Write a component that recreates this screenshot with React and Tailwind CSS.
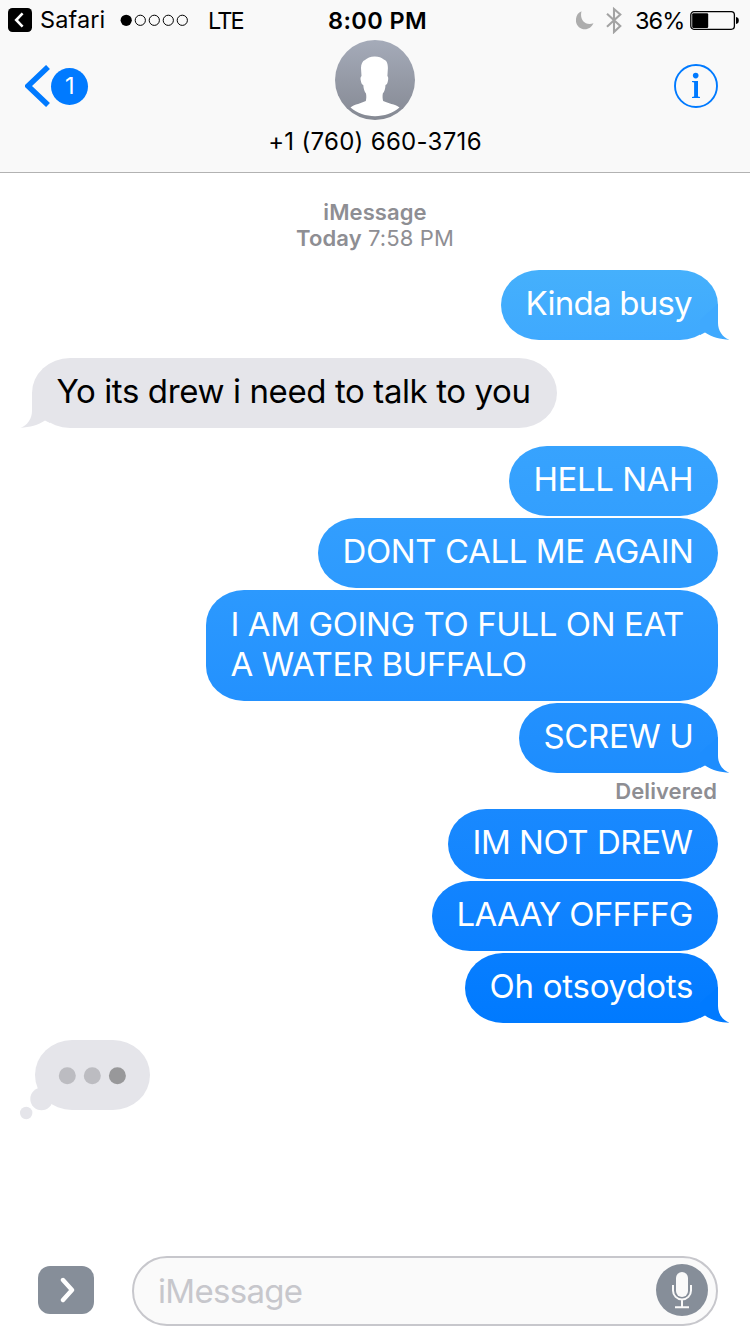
import React from "react";

const MESSAGES = [
  {
    lines: ["Kinda busy"],
    box: "w-[217px] h-[70px] mt-[19px] bg-linear-to-b from-[#45b0fc] to-[#3fa9fe]",
    text: "tracking-[-0.75px]",
    tail: "fill-[#3fa9fe]",
  },
  {
    lines: ["Yo its drew i need to talk to you"],
    incoming: true,
    box: "w-[525px] h-[70px] mt-[18px] bg-[#e5e5ea]",
    text: "tracking-[-0.39px]",
    tail: "fill-[#e5e5ea]",
  },
  {
    lines: ["HELL NAH"],
    box: "w-[209px] h-[70px] mt-[18px] bg-linear-to-b from-[#37a3fe] to-[#339ffe]",
    text: "tracking-[-0.45px]",
  },
  {
    lines: ["DONT CALL ME AGAIN"],
    box: "w-[400px] h-[70px] mt-[2px] bg-linear-to-b from-[#329efe] to-[#2d9afe]",
    text: "tracking-[-0.4px]",
  },
  {
    lines: ["I AM GOING TO FULL ON EAT", "A WATER BUFFALO"],
    box: "w-[512px] h-[111px] mt-[2px] bg-linear-to-b from-[#2c99fe] to-[#2391fe]",
    text: "tracking-[-0.4px]",
  },
  {
    lines: ["SCREW U"],
    box: "w-[199px] h-[70px] mt-[2px] bg-linear-to-b from-[#2391fe] to-[#1d8dfe]",
    text: "tracking-[-0.38px]",
    tail: "fill-[#1d8dfe]",
    status: "Delivered",
  },
  {
    lines: ["IM NOT DREW"],
    box: "w-[270px] h-[70px] bg-linear-to-b from-[#1989fe] to-[#1385ff]",
    text: "tracking-[-0.45px]",
  },
  {
    lines: ["LAAAY OFFFFG"],
    box: "w-[286px] h-[70px] mt-[2px] bg-linear-to-b from-[#1284ff] to-[#0b80ff]",
    text: "tracking-[-0.74px]",
  },
  {
    lines: ["Oh otsoydots"],
    box: "w-[253px] h-[70px] mt-[2px] bg-linear-to-b from-[#087eff] to-[#007aff]",
    text: "tracking-[-0.25px]",
    tail: "fill-[#007aff]",
  },
];

function StatusBar() {
  return (
    <div className="flex items-center h-10 pl-2 pr-[11px] text-[23.5px] leading-none">
      <div className="flex items-center w-[320px]">
        <svg className="w-6 h-6 shrink-0" viewBox="0 0 24 24">
          <rect width="24" height="24" rx="4.5" fill="#000" />
          <path d="M14.6 5.3 8.2 12l6.4 6.7" fill="none" stroke="#fff" strokeWidth="2.6" />
        </svg>
        <span className="ml-2 w-[80px] whitespace-nowrap tracking-[0.1px]">Safari</span>
        <svg className="w-[68px] h-3 shrink-0" viewBox="0 0 68 12">
          <circle cx="6.2" cy="6.3" r="5.6" fill="#000" />
          {[20.3, 34.3, 48.3, 62.3].map((cx) => (
            <circle key={cx} cx={cx} cy="6.3" r="5.1" fill="none" stroke="#000" />
          ))}
        </svg>
        <span className="mt-px ml-5 tracking-[-1.8px]">LTE</span>
      </div>
      <span className="mt-px w-[100px] whitespace-nowrap font-semibold tracking-[0.4px]">8:00 PM</span>
      <div className="ml-auto flex items-center">
        <svg className="w-[19px] h-[19px]" viewBox="0 0 19 19">
          <path d="M5.5.3C3.5 7.5 8 15.2 17.5 12.3 15.8 16.1 12.6 18.3 9 18.3 4 18.3-.1 14.4-.1 9.4-.1 5.2 1.9 1.6 5.5.3Z" fill="#adadad" />
        </svg>
        <svg className="ml-[11px] w-4 h-7" viewBox="0 0 16 28">
          <path d="M1 7.8 14.3 20 8 26V3l6.3 5.5L1 20.7" fill="none" stroke="#a3a3a3" strokeWidth="2.1" />
        </svg>
        <span className="mt-px ml-[13px] w-[50px] whitespace-nowrap tracking-[-0.9px]">36%</span>
        <svg className="ml-[5px] w-[49px] h-5" viewBox="0 0 49 20">
          <rect x="0.8" y="1.7" width="43.6" height="17.6" rx="3.2" fill="none" stroke="#000" strokeWidth="1.3" />
          <rect x="2.2" y="3.2" width="16" height="14.7" rx="1.2" fill="#000" />
          <path d="M46 7c2 .3 2.8 1.5 2.8 3.5S48 13.7 46 14Z" fill="#000" />
        </svg>
      </div>
    </div>
  );
}

function Header() {
  return (
    <header className="h-[173px] bg-[#f9f9f9] border-b border-[#b2b2b2]">
      <StatusBar />
      <div className="flex justify-between px-[25px]">
        <div className="flex w-[200px] pt-[25px]">
          <svg className="w-[25px] h-[42px]" viewBox="0 0 25 42">
            <path d="M23 2 3 21l20 19" fill="none" stroke="#007aff" strokeWidth="5.6" />
          </svg>
          <span className="mt-[2.5px] ml-[1.4px] flex items-center justify-center w-[37px] h-[37px] rounded-full bg-[#007aff] text-white text-[23.5px] leading-none">
            1
          </span>
        </div>
        <div className="flex flex-col items-center">
          <svg className="w-20 h-20" viewBox="0 0 80 80">
            <defs>
              <linearGradient id="avatar" x1="0" y1="0" x2="0" y2="1">
                <stop offset="0" stopColor="#a5abb9" />
                <stop offset="1" stopColor="#858993" />
              </linearGradient>
            </defs>
            <circle cx="40" cy="40" r="40" fill="url(#avatar)" />
            <path
              d="M39.5 16.5C35.5 16.7 32 18 30 20C27.5 21 26 24 26 28L26.5 36C25.2 37 25.3 39 26 41.5C26.4 43.5 26.8 44.6 28.3 45C28.5 49 29.5 51.5 31 53.5C31.5 56 31.4 58.5 30.8 61C26 63.5 20 64 15.5 67.5C22 73 31 76.2 40 76.2C49 76.2 58 73 64.5 67.5C60 64 53 63.5 48.2 61C47.5 58.5 47.4 56 47.8 53.5C49.5 51.5 50.3 49 50.5 45C52 44.6 52.4 43.5 52.8 41.5C53.4 39 53.5 37 52.4 36L52.9 28C52.9 23 51.5 20.5 48.8 19.5C46.5 17.5 43.5 16.4 39.5 16.5Z"
              fill="#fff"
            />
          </svg>
          <span className="mt-[7px] text-[24px] leading-[30px] whitespace-nowrap tracking-[0.3px]">
            +1 (760) 660-3716
          </span>
        </div>
        <div className="flex justify-end w-[200px] pt-6 pr-[7px]">
          <svg className="w-11 h-11" viewBox="0 0 44 44">
            <circle cx="22" cy="22" r="21" fill="none" stroke="#007aff" strokeWidth="1.9" />
            <circle cx="21.7" cy="11.6" r="2.8" fill="#007aff" />
            <path d="M18 17h6V32.5l2 .5v1H18v-1l2.1-.5V18.5L18 18Z" fill="#007aff" />
          </svg>
        </div>
      </div>
    </header>
  );
}

function Message({ lines, incoming, box, text, tail, status }) {
  return (
    <div className={incoming ? "flex flex-col items-start" : "flex flex-col items-end"}>
      <div
        className={`relative flex flex-col justify-center pl-[24.5px] pb-[4px] rounded-[38px/35px] ${
          incoming ? "text-black" : "text-white"
        } ${box}`}
      >
        {tail && (
          <svg
            className={`absolute bottom-0 w-[30px] h-10 ${incoming ? "left-[-12px] -scale-x-100" : "right-[-12px]"} ${tail}`}
            viewBox="0 0 30 40"
          >
            <path d="M18 4V23C18 30.5 22.5 37.5 29.5 39.7C20.5 39.5 11.5 37.2 5 32.6L0 35V20Z" />
          </svg>
        )}
        {lines.map((line) => (
          <span key={line} className={`relative w-max text-[33px] leading-10 whitespace-nowrap ${text}`}>
            {line}
          </span>
        ))}
      </div>
      {status && (
        <span className="h-9 pr-px text-[22px] leading-9 font-semibold text-[#8e8e93] tracking-[0.1px]">{status}</span>
      )}
    </div>
  );
}

function TypingIndicator() {
  return (
    <svg className="mt-[17px] ml-[-12px] w-[130px] h-20" viewBox="0 0 130 80">
      <g fill="#e5e5ea">
        <rect x="15" width="115" height="70" rx="37" ry="35" />
        <circle cx="21.5" cy="59" r="11.2" />
        <circle cx="6.2" cy="73" r="6.2" />
      </g>
      <circle cx="47.3" cy="35.7" r="8.5" fill="#bcbcc1" />
      <circle cx="72.3" cy="35.7" r="8.5" fill="#bcbcc1" />
      <circle cx="97.4" cy="35.7" r="8.5" fill="#98989a" />
    </svg>
  );
}

function Composer() {
  return (
    <footer className="flex items-center h-[70px] mb-2 pl-[38px] pr-8">
      <div className="flex items-center justify-center w-14 h-12 mb-[3px] rounded-[12px] bg-[#868e99]">
        <svg className="w-4 h-[26px] ml-[3px]" viewBox="0 0 16 26">
          <path d="M3 3l9 10-9 10" fill="none" stroke="#fff" strokeWidth="4.4" strokeLinecap="round" strokeLinejoin="round" />
        </svg>
      </div>
      <div className="flex items-center justify-between flex-1 h-[70px] ml-[38px] pl-6 pr-2 pb-[2px] rounded-full border-2 border-[#c7c7cc] bg-[#fafafa]">
        <span className="pt-[2px] text-[33px] leading-10 text-[#c7c7cc] tracking-[-0.7px]">iMessage</span>
        <svg className="w-[52px] h-[52px]" viewBox="0 0 52 52">
          <circle cx="26" cy="26" r="26" fill="#868e99" />
          <rect x="20" y="8" width="12" height="25" rx="6" fill="#fafafa" />
          <path d="M17 21v5.5a9 9 0 0 0 18 0V21M26 36v7M19 43.2h14" fill="none" stroke="#fafafa" strokeWidth="2" />
        </svg>
      </div>
    </footer>
  );
}

function App() {
  return (
    <div className="flex flex-col w-[750px] h-[1334px] overflow-hidden bg-white text-black font-['Inter',sans-serif]">
      <Header />
      <main className="flex-1 px-8 pt-[26px]">
        <div className="flex flex-col items-center text-[22px] leading-[26px] text-[#8e8e93]">
          <span className="font-semibold tracking-[0.1px]">iMessage</span>
          <span className="tracking-[0.1px]">
            <b className="font-semibold">Today</b> 7:58 PM
          </span>
        </div>
        {MESSAGES.map((message) => (
          <Message key={message.lines[0]} {...message} />
        ))}
        <TypingIndicator />
      </main>
      <Composer />
    </div>
  );
}

export default App;
